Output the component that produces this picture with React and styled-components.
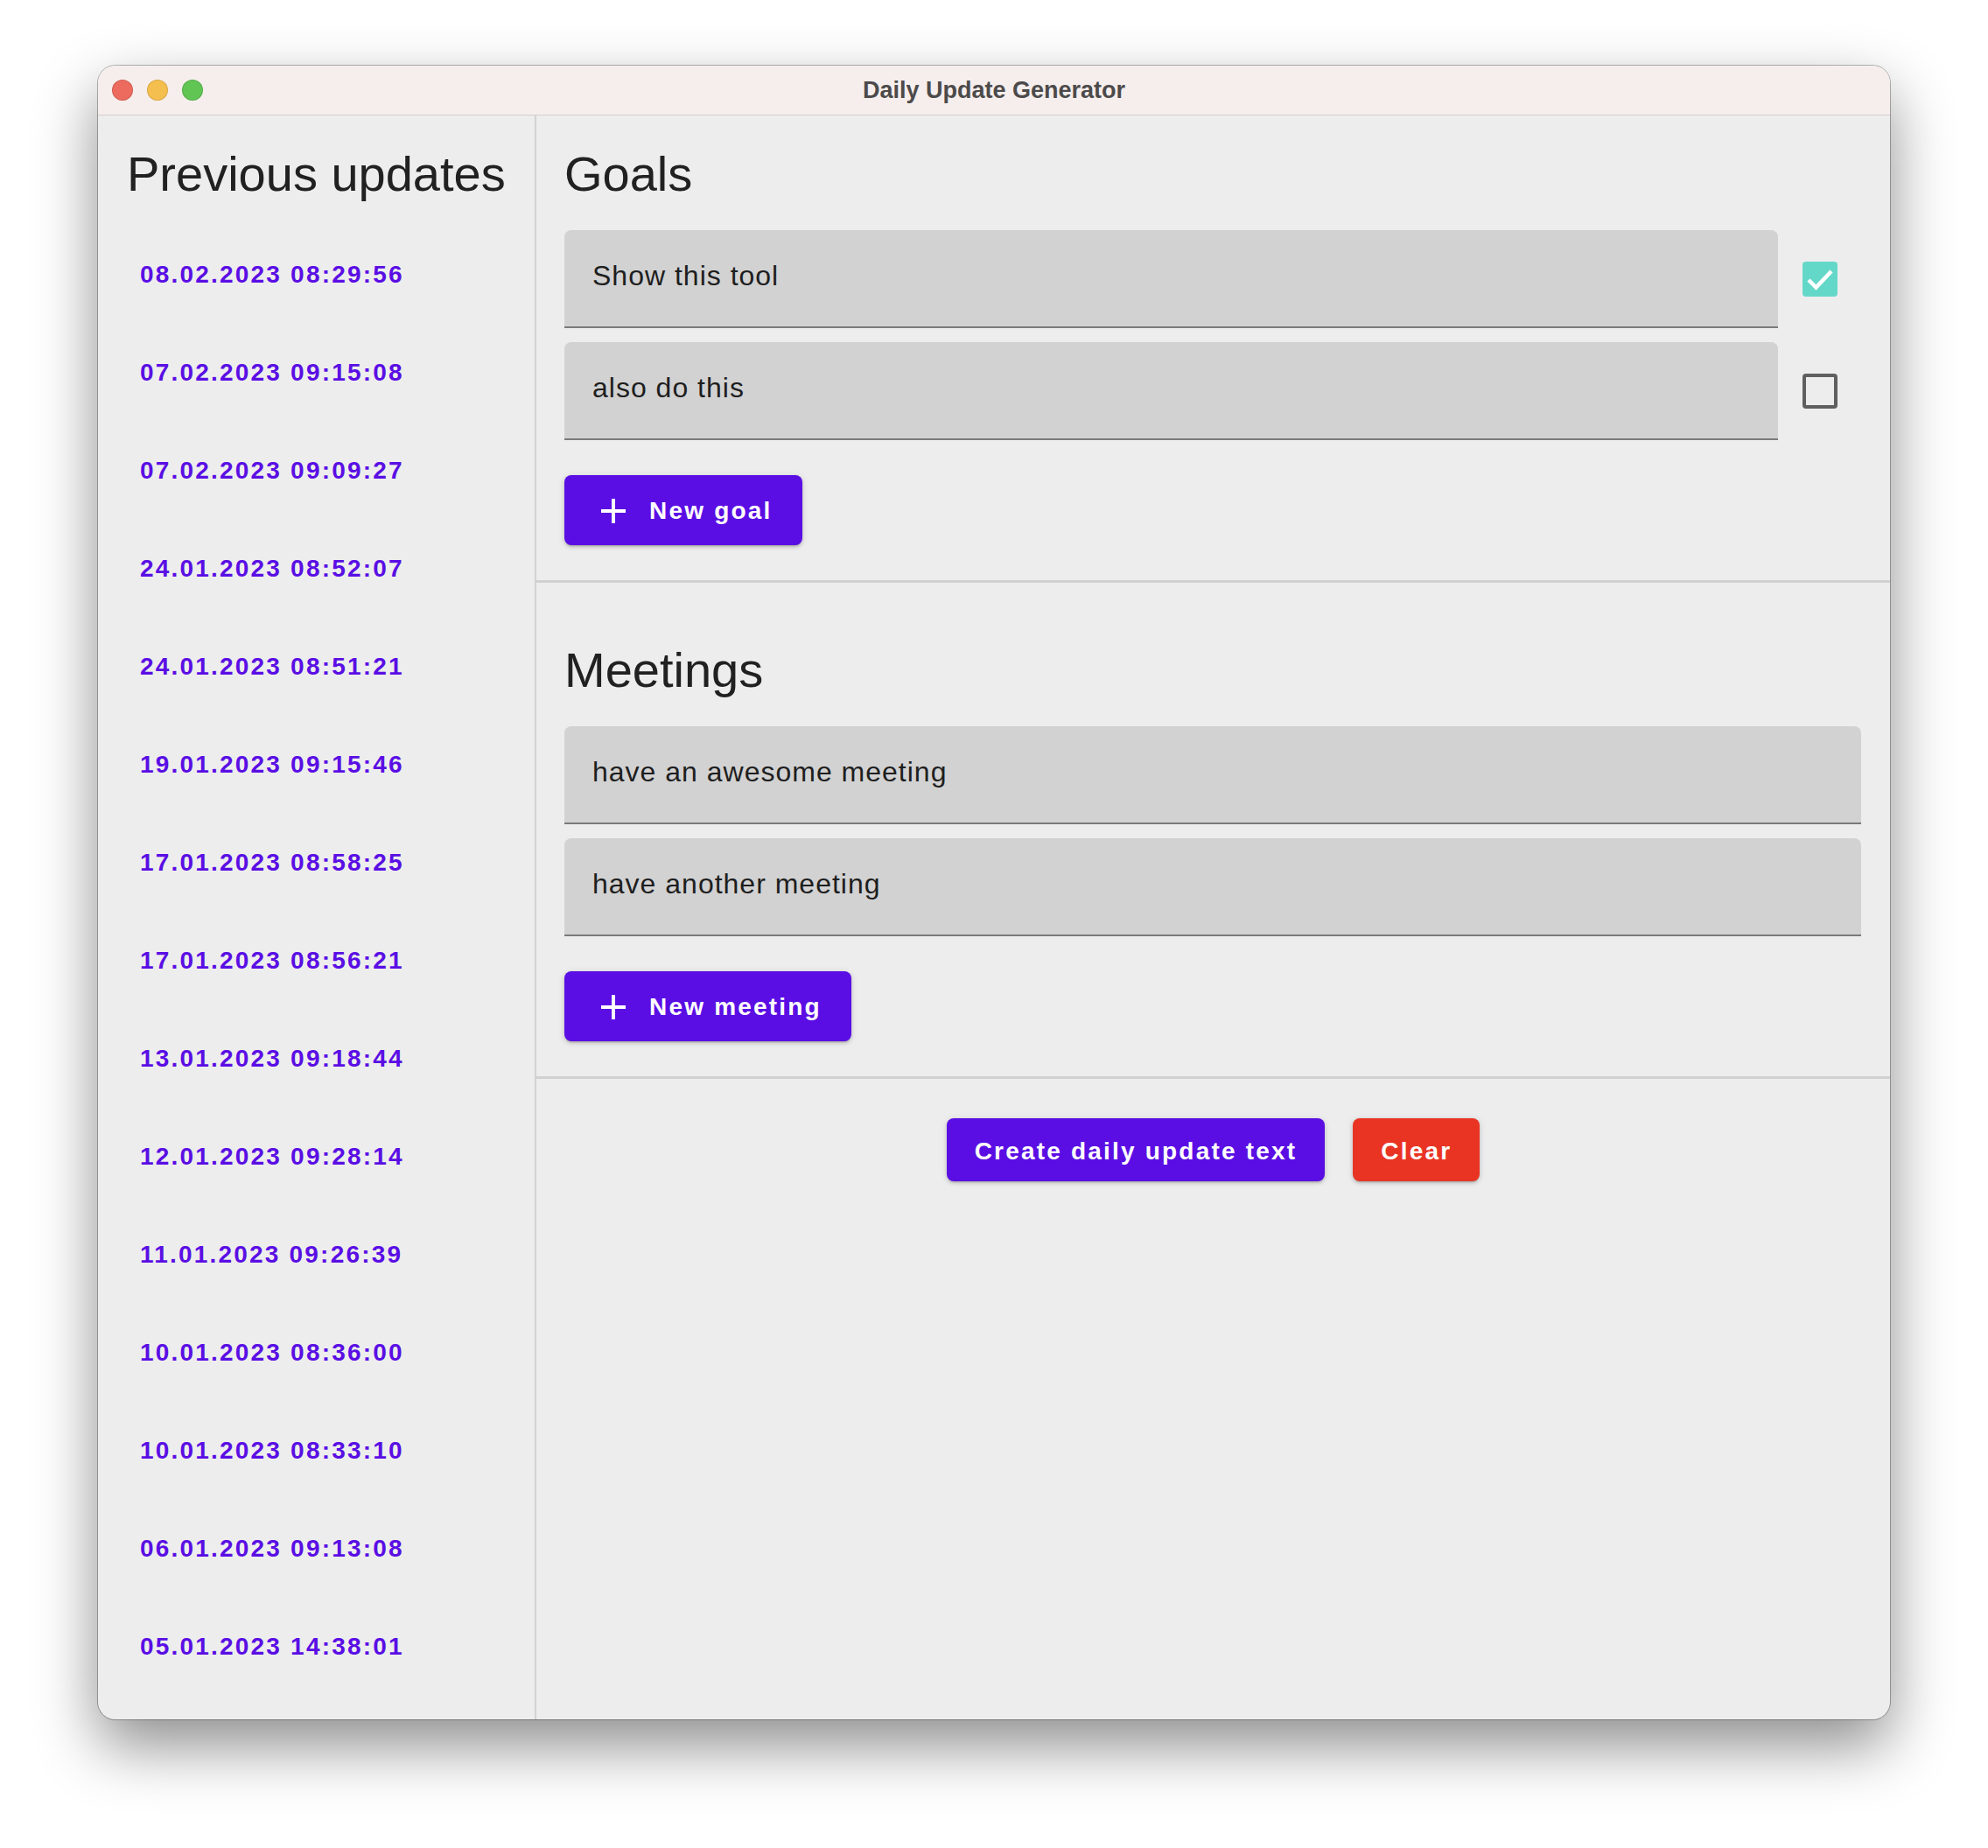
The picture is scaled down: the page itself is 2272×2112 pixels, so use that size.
import React from 'react'
import styled, { createGlobalStyle } from 'styled-components'

const PURPLE = '#5a0ee4'

const updates = [
  '08.02.2023 08:29:56',
  '07.02.2023 09:15:08',
  '07.02.2023 09:09:27',
  '24.01.2023 08:52:07',
  '24.01.2023 08:51:21',
  '19.01.2023 09:15:46',
  '17.01.2023 08:58:25',
  '17.01.2023 08:56:21',
  '13.01.2023 09:18:44',
  '12.01.2023 09:28:14',
  '11.01.2023 09:26:39',
  '10.01.2023 08:36:00',
  '10.01.2023 08:33:10',
  '06.01.2023 09:13:08',
  '05.01.2023 14:38:01',
]

const goals = [
  { text: 'Show this tool', done: true },
  { text: 'also do this', done: false },
]

const meetings = ['have an awesome meeting', 'have another meeting']

function PlusIcon() {
  return (
    <svg width="28" height="28" viewBox="0 0 28 28">
      <path d="M14 0v28M0 14h28" stroke="#fff" strokeWidth="4" />
    </svg>
  )
}

function CheckBox({ checked }) {
  return (
    <Box checked={checked}>
      {checked && (
        <svg width="40" height="40" viewBox="0 0 40 40">
          <polyline points="7,21 15.5,29.5 33,11" fill="none" stroke="#fff" strokeWidth="4.5" />
        </svg>
      )}
    </Box>
  )
}

function App() {
  return (
    <Page>
      <GlobalStyle />
      <Window>
        <TitleBar>
          <Lights>
            <Light color="#ed6a5e" />
            <Light color="#f5bf4f" />
            <Light color="#61c554" />
          </Lights>
          <Title>Daily Update Generator</Title>
          <div />
        </TitleBar>
        <Body>
          <Sidebar>
            <Heading>Previous updates</Heading>
            <DateList>
              {updates.map(u => <DateItem key={u}>{u}</DateItem>)}
            </DateList>
          </Sidebar>
          <Main>
            <Section top={35}>
              <Heading>Goals</Heading>
              <Fields>
                {goals.map(g => (
                  <Row key={g.text}>
                    <Field>{g.text}</Field>
                    <CheckCell><CheckBox checked={g.done} /></CheckCell>
                  </Row>
                ))}
              </Fields>
              <AddButton><PlusIcon /><span>New goal</span></AddButton>
            </Section>
            <Section top={68}>
              <Heading>Meetings</Heading>
              <Fields>
                {meetings.map(m => (
                  <Row key={m}><Field>{m}</Field></Row>
                ))}
              </Fields>
              <AddButton><PlusIcon /><span>New meeting</span></AddButton>
            </Section>
            <Actions>
              <Button>Create daily update text</Button>
              <Button color="#e93424">Clear</Button>
            </Actions>
          </Main>
        </Body>
      </Window>
    </Page>
  )
}

export default App

const GlobalStyle = createGlobalStyle`
html, body {
  margin: 0;
  padding: 0;
  background: #fff;
}
body {
  font-family: "Liberation Sans", Arial, Helvetica, sans-serif;
}
`
const Page = styled.div`
width: 2272px;
height: 2112px;
box-sizing: border-box;
padding: 75px 0 0 112px;
overflow: hidden;
`
const Window = styled.div`
width: 2048px;
height: 1890px;
border-radius: 20px;
overflow: hidden;
background: #ededed;
box-shadow: 0 0 0 1px rgba(0,0,0,0.28), 0 30px 70px rgba(0,0,0,0.45);
display: flex;
flex-direction: column;
`
const TitleBar = styled.div`
height: 57px;
flex-shrink: 0;
box-sizing: border-box;
display: grid;
grid-template-columns: 1fr auto 1fr;
align-items: center;
background: #f6eeed;
border-bottom: 1px solid #d3cece;
`
const Lights = styled.div`
display: flex;
gap: 16px;
padding-left: 16px;
`
const Light = styled.span`
width: 24px;
height: 24px;
border-radius: 50%;
background: ${p => p.color};
box-shadow: inset 0 0 0 1px rgba(0,0,0,0.12);
`
const Title = styled.div`
font-size: 27px;
font-weight: 700;
color: #4c4a4a;
`
const Body = styled.div`
flex: 1;
display: flex;
min-height: 0;
`
const Sidebar = styled.div`
width: 501px;
flex-shrink: 0;
box-sizing: border-box;
border-right: 2px solid #d2d2d2;
padding: 35px 0 0 33px;
overflow: hidden;
`
const Heading = styled.h2`
margin: 0 0 32px;
font-size: 56px;
line-height: 64px;
font-weight: 400;
color: #212121;
`
const DateList = styled.ul`
list-style: none;
margin: -5px 0 0;
padding: 0;
`
const DateItem = styled.li`
height: 112px;
display: flex;
align-items: center;
padding-left: 15px;
font-size: 28px;
font-weight: 700;
letter-spacing: 2.2px;
color: ${PURPLE};
`
const Main = styled.div`
flex: 1;
display: flex;
flex-direction: column;
`
const Section = styled.section`
padding: ${p => p.top}px 33px 40px 32px;
border-bottom: 3px solid #d1d1d1;
display: flex;
flex-direction: column;
align-items: flex-start;
`
const Fields = styled.div`
align-self: stretch;
display: flex;
flex-direction: column;
gap: 16px;
`
const Row = styled.div`
display: flex;
align-items: center;
`
const Field = styled.div`
flex: 1;
height: 112px;
box-sizing: border-box;
padding: 32px 32px 0;
background: #d2d2d2;
border-radius: 8px 8px 0 0;
border-bottom: 2px solid #7a7a7a;
font-size: 32px;
line-height: 40px;
letter-spacing: 1px;
color: #1e1e1e;
`
const CheckCell = styled.div`
width: 95px;
display: flex;
justify-content: center;
`
const Box = styled.div`
width: 40px;
height: 40px;
box-sizing: border-box;
border-radius: 4px;
background: ${p => p.checked ? '#64d8c8' : 'transparent'};
border: ${p => p.checked ? 'none' : '4px solid #5f5f5f'};
svg { display: block; }
`
const Button = styled.button`
display: inline-flex;
align-items: center;
height: 72px;
padding: 3px 32px 0;
border: none;
border-radius: 8px;
background: ${p => p.color || PURPLE};
color: #fff;
font-family: inherit;
font-size: 28px;
font-weight: 700;
letter-spacing: 2.2px;
box-shadow: 0 3px 2px -2px rgba(0,0,0,0.2), 0 2px 4px 0 rgba(0,0,0,0.14), 0 1px 8px 0 rgba(0,0,0,0.1);
cursor: pointer;
`
const AddButton = styled(Button)`
height: 80px;
margin-top: 40px;
padding: 2px 34px 0 42px;
gap: 27px;
svg { flex-shrink: 0; }
`
const Actions = styled.div`
display: flex;
justify-content: center;
gap: 32px;
padding-top: 45px;
`
